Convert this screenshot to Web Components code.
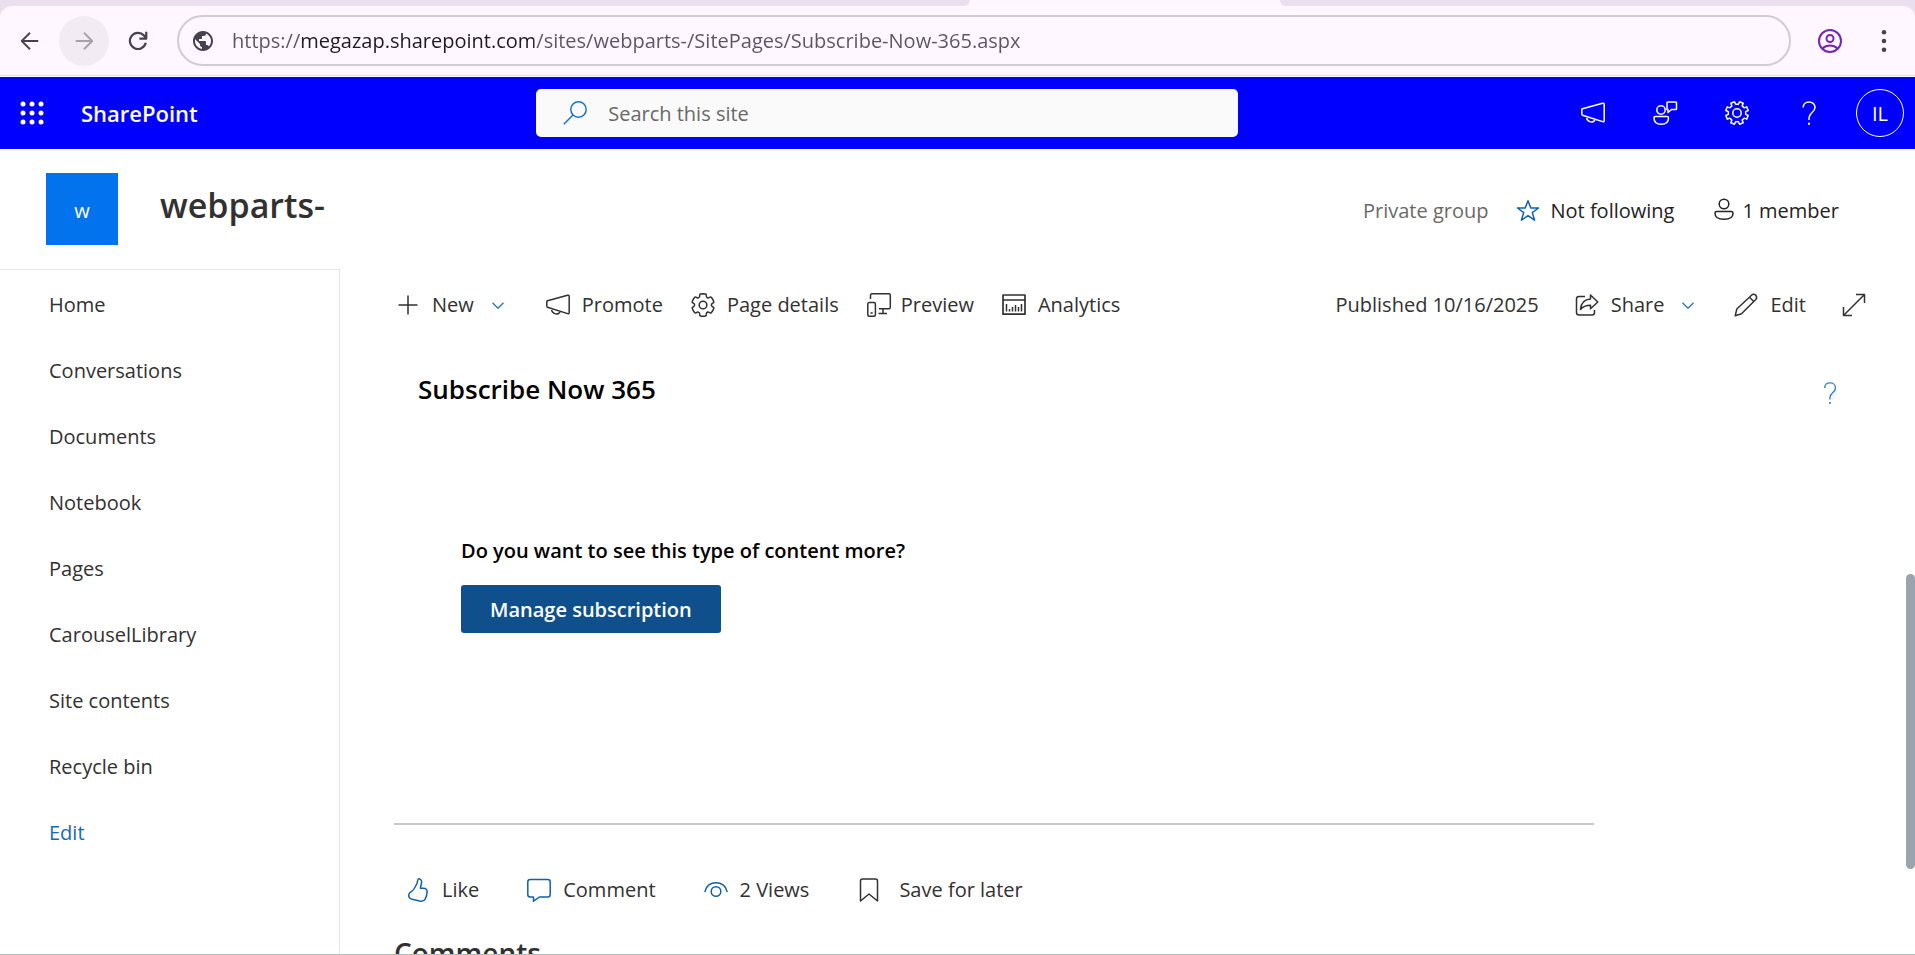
<!DOCTYPE html>
<html lang="en">
<head>
<meta charset="utf-8">
<meta name="viewport" content="width=device-width, initial-scale=1">
<title>Subscribe Now 365 - webparts-</title>
<style>
  body { margin: 0; font: 20px/28px "Open Sans", "Noto Sans", sans-serif; color: #323130; background: #fff; }
</style>
</head>
<body>
<app-shell>
  <browser-bar slot="browser"></browser-bar>
  <suite-bar slot="suite"></suite-bar>
  <site-header slot="header" initial="w">
    <span slot="title">webparts-</span>
    <span slot="privacy">Private group</span>
    <icon-button icon="star" class="blue snug">Not following</icon-button>
    <icon-button icon="person" class="tight">1 member</icon-button>
  </site-header>
  <site-nav slot="nav">
    <nav-item href="#home">Home</nav-item>
    <nav-item href="#conversations">Conversations</nav-item>
    <nav-item href="#documents">Documents</nav-item>
    <nav-item href="#notebook">Notebook</nav-item>
    <nav-item href="#pages">Pages</nav-item>
    <nav-item href="#carousel">CarouselLibrary</nav-item>
    <nav-item href="#contents">Site contents</nav-item>
    <nav-item href="#recycle">Recycle bin</nav-item>
    <nav-item href="#edit" accent>Edit</nav-item>
  </site-nav>
  <command-bar slot="commands">
    <icon-button icon="plus" menu>New</icon-button>
    <icon-button icon="megaphone">Promote</icon-button>
    <icon-button icon="settings">Page details</icon-button>
    <icon-button icon="preview" class="snug">Preview</icon-button>
    <icon-button icon="analytics">Analytics</icon-button>
    <span slot="far">Published 10/16/2025</span>
    <icon-button slot="far" icon="share" menu>Share</icon-button>
    <icon-button slot="far" icon="pencil">Edit</icon-button>
    <icon-button slot="far" icon="expand" label="Expand content"></icon-button>
  </command-bar>
  <subscribe-part>
    <span slot="title">Subscribe Now 365</span>
    <span slot="question">Do you want to see this type of content more?</span>
    <span slot="action">Manage subscription</span>
  </subscribe-part>
  <social-bar>
    <icon-button icon="like" class="blue">Like</icon-button>
    <icon-button icon="comment" class="blue">Comment</icon-button>
    <icon-button icon="eye" class="blue">2 Views</icon-button>
    <icon-button icon="bookmark" class="loose">Save for later</icon-button>
    <span slot="heading">Comments</span>
  </social-bar>
</app-shell>

<script>
  const define = (tag, html, setup) => {
    const template = document.createElement('template');
    template.innerHTML = html;
    customElements.define(tag, class extends HTMLElement {
      connectedCallback() {
        if (this.shadowRoot) return;
        this.attachShadow({ mode: 'open' }).append(template.content.cloneNode(true));
        if (setup) setup(this, this.shadowRoot);
      }
    });
  };

  const gear = (teeth, outer, inner) => {
    const step = Math.PI * 2 / teeth;
    const at = (r, a) => (12 + r * Math.sin(a)).toFixed(2) + ' ' + (12 - r * Math.cos(a)).toFixed(2);
    let d = '';
    for (let i = 0; i < teeth; i++) {
      const a = step * (i + 0.5);
      d += (i ? 'L' : 'M') + at(inner, a - step * 0.3) + 'L' + at(outer, a - step * 0.22)
        + 'L' + at(outer, a + step * 0.22) + 'L' + at(inner, a + step * 0.3);
    }
    return d + 'Z';
  };

  const ICONS = {
    back: '<path stroke-width="2" d="M21 12H3.500M12 3L3 12l9 9"/>',
    forward: '<path stroke-width="2" d="M3 12h17.500M12 3l9 9-9 9"/>',
    reload: '<path stroke-width="2.400" d="M20.500 14A8.800 8.800 0 1 1 18.500 6L20.500 8.500M21 2V9.500H13.500"/>',
    globe: '<path fill="currentColor" stroke="none" d="M12 2C6.480 2 2 6.480 2 12s4.480 10 10 10 10-4.480 10-10S17.520 2 12 2zm-1 17.930c-3.950-.490-7-3.850-7-7.930 0-.620.080-1.210.210-1.790L9 15v1c0 1.100.900 2 2 2v1.930zm6.900-2.540c-.260-.810-1-1.390-1.900-1.390h-1v-3c0-.550-.450-1-1-1H8v-2h2c.550 0 1-.450 1-1V7h2c1.100 0 2-.900 2-2v-.410c2.930 1.190 5 4.060 5 7.410 0 2.080-.800 3.970-2.100 5.390z"/>',
    profile: '<g stroke-width="2"><circle cx="12" cy="12" r="11"/><circle cx="12" cy="9.500" r="3.500"/><path d="M4.500 19.500c4-4 11-4 15 0"/></g>',
    dots: '<g fill="currentColor" stroke="none"><circle cx="12" cy="2.500" r="2.500"/><circle cx="12" cy="12" r="2.500"/><circle cx="12" cy="21.500" r="2.500"/></g>',
    waffle: '<g fill="currentColor" stroke="none">' + [3, 12, 21].map(y => [3, 12, 21].map(x => `<circle cx="${x}" cy="${y}" r="2.500"/>`).join('')).join('') + '</g>',
    search: '<circle cx="15.500" cy="8.500" r="7.700"/><path d="M10 14L.8 23.200"/>',
    megaphone: '<path d="M1.500 7.800L21.600 2.300Q23.200 2 23.200 3.500V19.500Q23.200 21 21.600 20.600L1.500 14.200Q.8 14 .8 13.200V8.800Q.8 8 1.500 7.800ZM5.500 15.600C5.500 22 13.500 22.300 14 18.400"/>',
    feedback: '<circle cx="8" cy="9" r="4.200"/><path d="M2.500 15.500H14Q15.500 15.500 15.500 17C15.500 21.500 12.500 23.300 8.200 23.300S1 21.500 1 17Q1 15.500 2.500 15.500ZM14 8.500V1.800Q14 1 14.800 1H22.700Q23.500 1 23.500 1.800V7.700Q23.500 8.500 22.700 8.500H18.500L15 11.500V8.500Z"/>',
    gear: `<path d="${gear(8, 11.5, 8.8)}"/><circle cx="12" cy="12" r="4.200"/>`,
    help: '<path d="M6.200 6.500C6.200 2.800 9 .9 12 .9S18 2.900 18 6.500C18 11.500 12 11.500 12 17V19"/><path stroke-width="2" d="M12 21.800v2"/>',
    star: '<path d="M12 1.800L14.800 9H22.500L16.300 13.600 18.600 21.200 12 16.700 5.400 21.200 7.700 13.600 1.500 9H9.200Z"/>',
    person: '<circle cx="12" cy="5" r="4.800"/><path d="M4.700 12.500H19.300Q21 12.500 21 14.200C21 18.500 17 20.200 12 20.200S3 18.500 3 14.200Q3 12.500 4.700 12.500Z"/>',
    plus: '<path d="M12 2.500v19M2.500 12h19"/>',
    settings: '<g transform="translate(12 12) scale(1.160) translate(-12 -12)" stroke-width="1.300"><path d="M12.010 2.250c.740 0 1.470.100 2.180.250.320.070.550.330.590.650l.170 1.530a1.380 1.380 0 0 0 1.920 1.110l1.400-.610c.300-.130.640-.060.850.170a9.800 9.800 0 0 1 2.200 3.800c.100.300 0 .630-.260.820l-1.250.920a1.380 1.380 0 0 0 0 2.220l1.250.920c.260.190.360.520.270.820a9.800 9.800 0 0 1-2.200 3.800.75.75 0 0 1-.850.170l-1.400-.620a1.380 1.380 0 0 0-1.930 1.120l-.170 1.520a.75.75 0 0 1-.580.650 9.520 9.520 0 0 1-4.400 0 .75.75 0 0 1-.570-.650l-.170-1.520a1.380 1.380 0 0 0-1.930-1.110l-1.400.620a.75.75 0 0 1-.850-.180 9.800 9.800 0 0 1-2.200-3.800c-.100-.300 0-.630.270-.820l1.240-.920a1.380 1.380 0 0 0 0-2.220l-1.240-.920a.75.75 0 0 1-.280-.820 9.800 9.800 0 0 1 2.200-3.800c.230-.230.570-.300.860-.170l1.400.620c.400.170.860.150 1.250-.080.380-.220.630-.600.680-1.040l.170-1.530a.75.75 0 0 1 .580-.650c.720-.160 1.450-.240 2.200-.250z"/><circle cx="12" cy="12" r="3.300"/></g>',
    preview: '<path d="M3.500 6V2.500Q3.500.8 5 .8H22Q23.300.8 23.300 2.500V14Q23.300 15.800 22 15.800H12M16 16V20.500M11.500 20.500H20"/><rect x=".8" y="9.500" width="7.600" height="13.700" rx="1.500"/><path d="M3.500 20h2.200"/>',
    analytics: '<path stroke-width="1.700" d="M1 2H23V21.200H1ZM1 7H23"/><path stroke-width="1.500" d="M4.500 11v7.500M7.500 16v2.500M10.500 14V18.500M13.500 12V18.500M16.500 14V18.500M19.500 11v7.500"/>',
    share: '<path d="M10 3.500H4Q1.500 3.500 1.500 6V19.500Q1.500 22 4 22H17Q19.500 22 19.500 19.500V17M15.500 2L22.800 9 15.500 15.800V12.200C10.500 12.200 8 13.300 5.500 16.500 6 10 9.500 6.300 15.500 6Z"/>',
    pencil: '<path d="M1.200 22.800L2.800 16 17.500 2.200Q19.300.5 21.800 2.200 23.500 4.500 21.800 6.500L7.500 20.800ZM15.500 4.200L19.800 8.500"/>',
    expand: '<path d="M1.500 22.500L22.500 1.500M14 1.500H22.500V10M1.500 14V22.500H10"/>',
    like: '<path d="M12.500.9C13.200.7 15.800 1.500 15.600 4 15.500 6.500 14.400 8.500 14.400 10.300H17.500C19.800 10.300 21.200 11.600 21.100 13.700 21 16 20.300 19 19.300 20.900 18.300 23 16 23.500 13.500 23L5.200 20.900C3.300 20.300 2.700 19 2.700 17.200 2.700 15 3.500 14.800 5.500 13.600 8.500 11.500 9.700 8 10.900 5.500 11.800 3.500 11.500 1.200 12.500.9Z"/>',
    comment: '<path d="M3.200 1.500H20.800Q23.200 1.500 23.200 4V16.500Q23.200 19 20.800 19H12.500L6.500 23.200V19H3.200Q.8 19 .8 16.500V4Q.8 1.500 3.200 1.500Z"/>',
    eye: '<path d="M.8 14C3 1.500 21 1.500 23.200 14"/><circle cx="12" cy="13.500" r="4.800"/>',
    bookmark: '<path d="M3.500 23V3Q3.500 .9 5.600 .9H18.400Q20.500 .9 20.500 3V23L12 16Z"/>',
    chevron: '<path d="M1 7.500L12 18.500 23 7.500" stroke-width="2.500"/>'
  };

  define('ui-icon', `
    <style>
      :host { display: inline-flex; flex: none; width: var(--icon-size, 24px); height: var(--icon-size, 24px); }
      svg { width: 100%; height: 100%; overflow: visible; fill: none; stroke: currentColor; stroke-width: 1.5; stroke-linejoin: round; }
    </style>
    <svg viewBox="0 0 24 24" aria-hidden="true"></svg>`,
    (el, root) => { root.querySelector('svg').innerHTML = ICONS[el.getAttribute('name')] || ''; });

  define('icon-button', `
    <style>
      :host { display: block; --gap: 12px; }
      :host(.tight) { --gap: 6px; }
      :host(.snug) { --gap: 10px; }
      :host(.loose) { --gap: 18px; }
      :host([menu]) { margin-right: var(--menu-space, 14px); }
      button { display: flex; align-items: center; gap: var(--gap); padding: 0; border: 0; background: none; font: inherit; color: inherit; white-space: nowrap; cursor: pointer; }
      :host(.blue) .icon { color: #0f62ac; }
      .chevron { --icon-size: 12px; margin-left: 6px; color: #2b74b8; }
    </style>
    <button type="button"></button>`,
    (el, root) => {
      const button = root.querySelector('button');
      button.innerHTML = `<ui-icon class="icon" name="${el.getAttribute('icon')}"></ui-icon>`
        + (el.hasAttribute('label') ? '' : '<slot></slot>')
        + (el.hasAttribute('menu') ? '<ui-icon class="chevron" name="chevron"></ui-icon>' : '');
      if (el.hasAttribute('label')) button.setAttribute('aria-label', el.getAttribute('label'));
    });

  define('browser-bar', `
    <style>
      :host { display: block; background: #eadfee; border-bottom: 1px solid #fff; color: #47414f; }
      .strip { display: flex; height: 6px; background: #fef7ff; }
      .strip i { flex: 635; background: #eadfee; border-bottom-left-radius: 8px; }
      .strip i:first-child { flex: 970; border-radius: 0 0 8px 0; }
      .strip b { flex: 310; }
      .bar { display: flex; align-items: center; box-sizing: border-box; height: 70px; padding: 0 6px 0 5px; background: #fef7ff; border-bottom: 1px solid #e3dbe5; border-radius: 12px 12px 0 0; }
      button { display: flex; flex: none; align-items: center; justify-content: center; width: 50px; height: 50px; padding: 0; border: 0; border-radius: 50%; background: none; color: inherit; --icon-size: 22px; }
      button[disabled] { background: #f2ebf3; color: #a8a1aa; }
      .nav { display: flex; gap: 4px; }
      .address { display: flex; flex: 1; align-items: center; gap: 17px; box-sizing: border-box; height: 51px; margin: 0 14px; padding: 0 24px 0 12px; border: 2px solid #d2cbd5; border-radius: 26px; --icon-size: 24px; }
      input { flex: 1; min-width: 0; padding: 0; border: 0; outline: 0; font: inherit; color: transparent; background: linear-gradient(90deg, #5b5560 68px, #1d1b20 68px 302px, #5b5560 302px); -webkit-background-clip: text; background-clip: text; }
      .end { display: flex; gap: 4px; }
      .profile { --icon-size: 24px; color: #7626b5; }
    </style>
    <div class="strip"><i></i><b></b><i></i></div>
    <div class="bar">
      <div class="nav">
        <button aria-label="Back"><ui-icon name="back"></ui-icon></button>
        <button aria-label="Forward" disabled><ui-icon name="forward"></ui-icon></button>
        <button aria-label="Reload"><ui-icon name="reload"></ui-icon></button>
      </div>
      <label class="address">
        <ui-icon name="globe"></ui-icon>
        <input type="text" aria-label="Address" spellcheck="false" value="https://megazap.sharepoint.com/sites/webparts-/SitePages/Subscribe-Now-365.aspx">
      </label>
      <div class="end">
        <button class="profile" aria-label="Profile"><ui-icon name="profile"></ui-icon></button>
        <button aria-label="Browser menu"><ui-icon name="dots"></ui-icon></button>
      </div>
    </div>`);

  define('suite-bar', `
    <style>
      :host { display: flex; align-items: center; height: 72px; background: #00f; color: #fff; }
      button { flex: none; display: flex; align-items: center; justify-content: center; width: 72px; height: 72px; padding: 0; border: 0; background: none; color: inherit; font: inherit; }
      .brand { display: flex; align-items: center; flex: 0 0 28%; gap: 9px; }
      .brand a { color: inherit; font-size: 22px; font-weight: 600; text-decoration: none; }
      .waffle { justify-content: flex-start; padding-left: 20px; }
      .search { display: flex; flex: 0 1 702px; align-items: center; gap: 21px; box-sizing: border-box; height: 48px; padding: 0 24px 0 27px; border-radius: 5px; background: #fafafa; color: #1a73c0; }
      input { flex: 1; min-width: 0; padding: 2px 0 0; border: 0; outline: 0; background: none; font: inherit; color: #323130; }
      input::placeholder { color: #696867; opacity: 1; }
      .actions { display: flex; margin-left: auto; }
      .avatar { width: 70px; }
      .avatar span { box-sizing: border-box; width: 48px; height: 48px; border: 1px solid #fff; border-radius: 50%; line-height: 48px; text-align: center; }
    </style>
    <div class="brand">
      <button class="waffle" aria-label="App launcher"><ui-icon name="waffle"></ui-icon></button>
      <a href="#sharepoint">SharePoint</a>
    </div>
    <label class="search"><ui-icon name="search"></ui-icon><input type="search" aria-label="Search this site" placeholder="Search this site"></label>
    <div class="actions">
      <button aria-label="News"><ui-icon name="megaphone"></ui-icon></button>
      <button aria-label="Feedback"><ui-icon name="feedback"></ui-icon></button>
      <button aria-label="Settings"><ui-icon name="gear"></ui-icon></button>
      <button aria-label="Help"><ui-icon name="help"></ui-icon></button>
      <button class="avatar" aria-label="Account"><span>IL</span></button>
    </div>`);

  define('site-header', `
    <style>
      :host { display: flex; align-items: center; padding: 24px 76px 24px 46px; }
      .logo { width: 72px; height: 72px; margin-right: 42px; background: #0273ec; color: #fff; line-height: 76px; text-align: center; }
      h1 { margin: 0; padding-bottom: 8px; font-size: 34px; font-weight: 600; line-height: 48px; }
      .info { display: flex; align-items: center; gap: 28px; margin-left: auto; padding-top: 4px; color: #242322; }
      .privacy { color: #6b6967; }
      ::slotted(.tight) { margin-left: 10px; }
    </style>
    <div class="logo"></div>
    <h1><slot name="title"></slot></h1>
    <div class="info"><span class="privacy"><slot name="privacy"></slot></span><slot></slot></div>`,
    (el, root) => { root.querySelector('.logo').textContent = el.getAttribute('initial'); });

  define('site-nav', `
    <style>
      :host { display: block; border: solid #e6e6e6; border-width: 1px 1px 0 0; }
      nav { display: flex; flex-direction: column; padding-top: 2px; }
    </style>
    <nav aria-label="Site"><slot></slot></nav>`);

  define('nav-item', `
    <style>
      :host { display: block; }
      a { display: block; padding: 0 49px; color: inherit; line-height: 66px; text-decoration: none; }
      :host([accent]) a { color: #0f6cbd; }
    </style>
    <a><slot></slot></a>`,
    (el, root) => { root.querySelector('a').href = el.getAttribute('href'); });

  define('command-bar', `
    <style>
      :host { display: flex; align-items: center; justify-content: space-between; height: 72px; padding: 0 49px 0 56px; }
      div { display: flex; align-items: center; gap: 28px; }
      .far { gap: 36px; --menu-space: 4px; }
    </style>
    <div><slot></slot></div>
    <div class="far"><slot name="far"></slot></div>`);

  define('subscribe-part', `
    <style>
      :host { display: block; padding-left: 78px; color: #000; }
      header { display: flex; align-items: center; justify-content: space-between; padding: 30px 74px 0 0; }
      h2 { margin: 0; font-size: 26px; font-weight: 600; line-height: 36px; }
      header button { display: flex; padding: 8px 0 0; border: 0; background: none; color: #2b7fd0; --icon-size: 22px; }
      .body { padding: 130px 0 190px 43px; }
      p { margin: 0 0 20px; font-weight: 600; }
      .primary { height: 48px; padding: 2px 29px 0; border: 0; border-radius: 3px; background: #0f4f8b; color: #fff; font: inherit; font-weight: 600; }
    </style>
    <header>
      <h2><slot name="title"></slot></h2>
      <button aria-label="Help"><ui-icon name="help"></ui-icon></button>
    </header>
    <div class="body">
      <p><slot name="question"></slot></p>
      <button class="primary"><slot name="action"></slot></button>
    </div>`);

  define('social-bar', `
    <style>
      :host { display: block; max-width: 1200px; margin-left: 54px; border-top: 2px solid #c8c8c8; }
      .actions { display: flex; align-items: center; gap: 48px; padding: 51px 0 0 12px; }
      h2 { margin: 29px 0 0; font-size: 28px; font-weight: 600; line-height: 40px; }
    </style>
    <div class="actions"><slot></slot></div>
    <h2><slot name="heading"></slot></h2>`);

  define('app-shell', `
    <style>
      :host { display: flex; flex-direction: column; position: relative; box-sizing: border-box; height: 100vh; overflow: hidden; border-bottom: 1px solid #b0bcb8; }
      .top { flex: none; }
      .content { display: grid; grid-template-columns: 340px minmax(0, 1fr); flex: 1; min-height: 0; }
      main { min-width: 0; min-height: 0; overflow: hidden; }
      .thumb { position: absolute; right: 0; top: 574px; width: 9px; height: 295px; border-radius: 5px; background: #9aa4ac; }
    </style>
    <div class="top"><slot name="browser"></slot><slot name="suite"></slot><slot name="header"></slot></div>
    <div class="content">
      <slot name="nav"></slot>
      <main><slot name="commands"></slot><slot></slot></main>
    </div>
    <div class="thumb"></div>`);
</script>
</body>
</html>
